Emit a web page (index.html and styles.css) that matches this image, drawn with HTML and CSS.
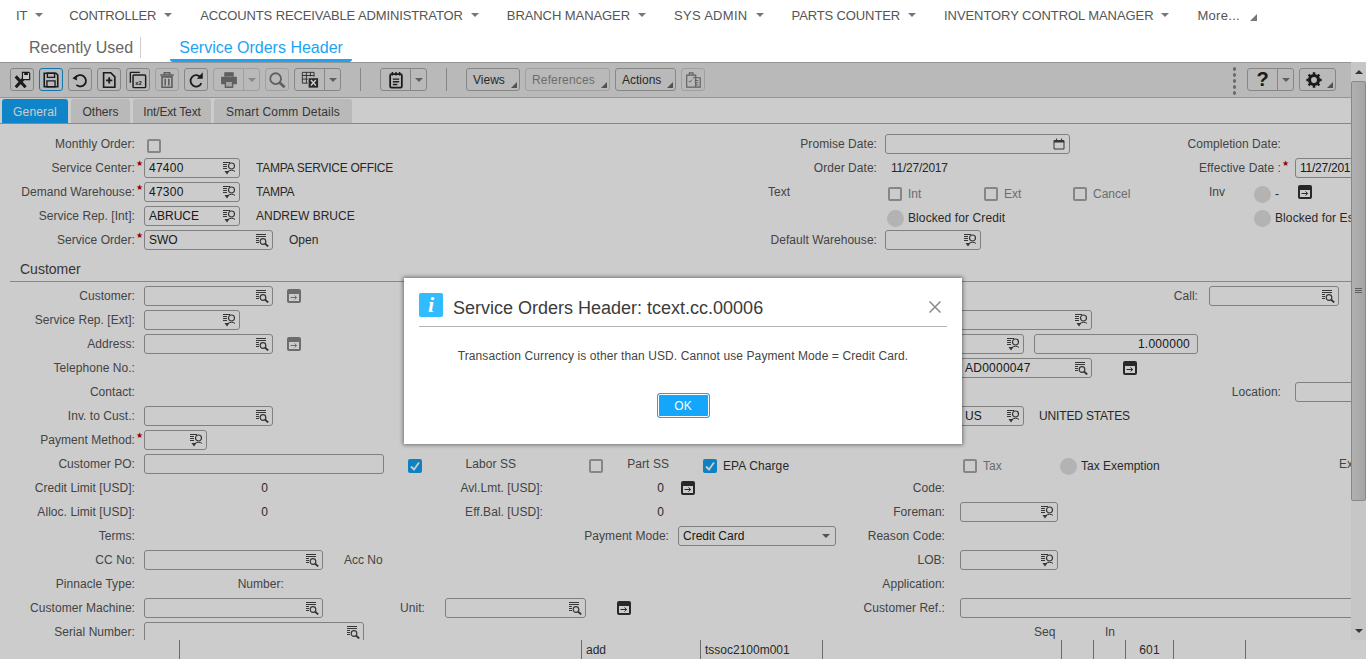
FILE: index.html
```html
<!DOCTYPE html>
<html lang="en">
<head>
<meta charset="utf-8">
<title>Service Orders Header</title>
<link rel="stylesheet" href="styles.css">
</head>
<body>
<svg class="defs" width="0" height="0" aria-hidden="true">
  <symbol id="lk" viewBox="0 0 13 13"><path d="M0 .5h10M0 2.5h10M0 4.5h3M0 6.5h3M0 8.5h3" stroke="currentColor" fill="none"/><circle cx="7" cy="7.5" r="2.8" stroke="currentColor" fill="none" stroke-width="1.2"/><path d="M9 9.5l3.2 3" stroke="currentColor" stroke-width="1.8" fill="none"/></symbol>
  <symbol id="lp" viewBox="0 0 13 13"><path d="M0 .5h7M0 2.5h4M0 4.5h4M0 6.5h4" stroke="currentColor" fill="none"/><circle cx="8.5" cy="4" r="3" stroke="currentColor" fill="none" stroke-width="1.2"/><path d="M5 9.5c.6-1.6 6.4-1.6 7 0" stroke="currentColor" fill="none"/><path d="M1.5 9h5l-2.5 3.5z" fill="currentColor"/></symbol>
  <symbol id="go" viewBox="0 0 14 14"><rect width="14" height="14" rx="2" fill="currentColor"/><rect x="2" y="5" width="10" height="7" fill="#fff"/><path d="M3.5 8.5h6M7.5 6.5l2.2 2-2.2 2" stroke="currentColor" fill="none"/></symbol>
  <symbol id="cal" viewBox="0 0 12 12"><path d="M1 2.5h10v8.5H1z" fill="none" stroke="currentColor"/><path d="M1 2h10v2.500H1z" fill="currentColor"/><path d="M3.500 .5v2M8.500 .5v2" stroke="currentColor"/></symbol>
</svg>

<nav class="topnav">
  <a class="nav-item first">IT<b class="caret"></b></a>
  <a class="nav-item n-ctrl">CONTROLLER<b class="caret"></b></a>
  <a class="nav-item">ACCOUNTS RECEIVABLE ADMINISTRATOR<b class="caret"></b></a>
  <a class="nav-item n-mid">BRANCH MANAGER<b class="caret"></b></a>
  <a class="nav-item n-open">SYS ADMIN<b class="caret"></b></a>
  <a class="nav-item">PARTS COUNTER<b class="caret"></b></a>
  <a class="nav-item n-mid">INVENTORY CONTROL MANAGER<b class="caret"></b></a>
  <a class="nav-item n-open">More...<b class="corner-nav"></b></a>
</nav>

<div class="pagetabs">
  <a class="pagetab recent">Recently Used</a>
  <a class="pagetab current">Service Orders Header</a>
</div>

<main class="app">
  <div class="work">
    <div class="pane">
      <div class="toolbar">
        <button class="tb"><svg viewBox="0 0 20 20"><path d="M3 6l11 12M14 6L3 18" stroke="#222" stroke-width="3.400" fill="none"/><path d="M10.500 1.500h7l1 1v7h-8z" fill="#fff" stroke="#222" stroke-width="1.300"/><path d="M12.500 1.500h4v3h-4z" fill="#222"/></svg></button>
        <button class="tb active"><svg viewBox="0 0 20 20"><path d="M2.500 2.500h13l2 2v13h-15z" fill="none" stroke="#222" stroke-width="1.800"/><path d="M6 2.500h8v4.500H6z" fill="none" stroke="#222" stroke-width="1.500"/><path d="M5.500 11h9v6.500h-9z" fill="none" stroke="#222" stroke-width="1.500"/></svg></button>
        <button class="tb"><svg viewBox="0 0 20 20"><path d="M5 7.500a6.300 6.300 0 1 1 1 8" fill="none" stroke="#222" stroke-width="2"/><path d="M1.500 8l5-3.500v6z" fill="#222"/></svg></button>
        <button class="tb"><svg viewBox="0 0 20 20"><path d="M4 2h8l4.500 4.500V18H4z" fill="none" stroke="#222" stroke-width="1.800"/><path d="M10.200 7v7M6.700 10.500h7" stroke="#222" stroke-width="2"/></svg></button>
        <button class="tb"><svg viewBox="0 0 20 20"><path d="M1.500 1.500H12M1.500 1.500V13" fill="none" stroke="#222" stroke-width="1.500"/><rect x="4.500" y="4.500" width="14" height="14" rx="1" fill="none" stroke="#222" stroke-width="1.600"/><text class="x2" x="7" y="15.500">x2</text></svg></button>
        <button class="tb off"><svg viewBox="0 0 20 20"><path d="M2.500 4.500h15M7 4V2h6v2M4.500 6.500h11V18h-11zM8 8.500V16M12 8.500V16" fill="none" stroke="#777" stroke-width="1.800"/></svg></button>
        <button class="tb"><svg viewBox="0 0 20 20"><path d="M15.500 7.500a6.300 6.300 0 1 0 .5 6" fill="none" stroke="#222" stroke-width="2"/><path d="M11 8.500h6.500V1.500z" fill="#222"/></svg></button>
        <div class="split off">
          <button class="tb main-part"><svg viewBox="0 0 20 20"><path d="M5.500 6V2h9v4M5.500 14H2V7h16v7h-3.500" fill="#777" stroke="#777" stroke-width="1.500"/><path d="M6 11.500h8V18H6z" fill="#ccc" stroke="#777" stroke-width="1.600"/></svg></button>
          <button class="tb drop"><b class="caret"></b></button>
        </div>
        <button class="tb off"><svg viewBox="0 0 20 20"><circle cx="8.500" cy="8.500" r="6" fill="none" stroke="#777" stroke-width="2"/><path d="M13 13l5.500 5" stroke="#777" stroke-width="3"/></svg></button>
        <div class="split">
          <button class="tb main-part"><svg viewBox="0 0 20 20"><path d="M1.500 1.500h13v5M1.500 1.500v12h6M1.500 5h13M1.500 9h6M6 1.500v12M10.500 1.500V6" fill="none" stroke="#333"/><path d="M8.500 8h10.500v10.500H8.500z" fill="#333"/><path d="M11 10l5.500 6M16.500 10L11 16" stroke="#fff" stroke-width="1.700"/></svg></button>
          <button class="tb drop"><b class="caret"></b></button>
        </div>
        <span class="sep"></span>
        <div class="split">
          <button class="tb main-part"><svg viewBox="0 0 20 20"><rect x="3.500" y="3.500" width="13" height="15" rx="1.500" fill="none" stroke="#222" stroke-width="2"/><path d="M6 1v4M10 1v4M14 1v4M6.500 9h7M6.500 12h7M6.500 15h5" stroke="#222" stroke-width="1.600"/></svg></button>
          <button class="tb drop"><b class="caret"></b></button>
        </div>
        <span class="sep"></span>
        <button class="tb text views">Views<b class="corner"></b></button>
        <button class="tb text refs off">References<b class="corner"></b></button>
        <button class="tb text actions">Actions<b class="corner"></b></button>
        <button class="tb off"><svg viewBox="0 0 20 20"><path d="M3 4.500h10V18H3zM6 4.500V2h4v2.500M10 7.500h8V18h-5" fill="none" stroke="#777" stroke-width="1.300"/><path d="M5 11l1.500 1.500L9 9.500M12 10.500h4M12 13h4M12 15.500h4" fill="none" stroke="#777"/></svg></button>
        <span class="dots"></span>
        <div class="split help">
          <button class="tb main-part qmark">?</button>
          <button class="tb drop"><b class="caret"></b></button>
        </div>
        <button class="tb gear"><svg viewBox="0 0 20 20"><circle cx="10" cy="10" r="5" fill="none" stroke="#222" stroke-width="3.600"/><path d="M10 1.500v4M10 14.500v4M1.500 10h4M14.500 10h4M4 4l2.800 2.800M13.200 13.200L16 16M16 4l-2.800 2.800M6.800 13.200L4 16" stroke="#222" stroke-width="2.800"/></svg><b class="corner"></b></button>
      </div>

      <div class="formtabs">
        <a class="ftab t-general on">General</a>
        <a class="ftab t-others">Others</a>
        <a class="ftab t-text">Int/Ext Text</a>
        <a class="ftab t-smart">Smart Comm Details</a>
      </div>

      <form class="form">
        <div class="row r1">
          <label class="lab">Monthly Order:</label><span class="chk"></span>
          <label class="lab p8">Promise Date:</label>
          <span class="field"><svg class="ic cal"><use href="#cal"/></svg></span>
          <label class="lab">Completion Date:</label>
        </div>
        <div class="row r2">
          <label class="lab req">Service Center:</label>
          <span class="field mr16"><em class="digits">47400</em><svg class="ic"><use href="#lp"/></svg></span>
          <span class="val tight">TAMPA SERVICE OFFICE</span>
          <label class="lab p14">Order Date:</label>
          <span class="val tight">11/27/2017</span>
          <label class="lab p14 req">Effective Date :</label>
          <span class="field"><em class="tight">11/27/2017</em></span>
        </div>
        <div class="row r3">
          <label class="lab req">Demand Warehouse:</label>
          <span class="field mr16"><em class="digits">47300</em><svg class="ic"><use href="#lp"/></svg></span>
          <span class="val tight">TAMPA</span>
          <span class="val soft-text">Text</span>
          <span class="chk"></span><span class="val dim low">Int</span>
          <span class="chk"></span><span class="val dim low">Ext</span>
          <span class="chk"></span><span class="val dim low">Cancel</span>
          <span class="val soft-text">Inv</span>
          <span class="dot low"></span><span class="val low">-</span>
          <svg class="go"><use href="#go"/></svg>
        </div>
        <div class="row r4">
          <label class="lab">Service Rep. [Int]:</label>
          <span class="field mr16"><em>ABRUCE</em><svg class="ic"><use href="#lp"/></svg></span>
          <span class="val">ANDREW BRUCE</span>
          <span class="dot low"></span><span class="val low wide">Blocked for Credit</span>
          <span class="dot low"></span><span class="val low wide">Blocked for Estimates</span>
        </div>
        <div class="row r5">
          <label class="lab req">Service Order:</label>
          <span class="field mr16"><em>SWO</em><svg class="ic"><use href="#lk"/></svg></span>
          <span class="val">Open</span>
          <label class="lab p8">Default Warehouse:</label>
          <span class="field"><svg class="ic"><use href="#lp"/></svg></span>
        </div>

        <h2 class="section">Customer</h2>

        <div class="row r6">
          <label class="lab">Customer:</label>
          <span class="field"><svg class="ic"><use href="#lk"/></svg></span>
          <svg class="go soft"><use href="#go"/></svg>
          <label class="lab p11">Call:</label>
          <span class="field"><svg class="ic"><use href="#lk"/></svg></span>
        </div>
        <div class="row r7">
          <label class="lab">Service Rep. [Ext]:</label>
          <span class="field"><svg class="ic"><use href="#lp"/></svg></span>
          <i></i>
          <span class="field"><svg class="ic"><use href="#lp"/></svg></span>
        </div>
        <div class="row r8">
          <label class="lab">Address:</label>
          <span class="field"><svg class="ic"><use href="#lk"/></svg></span>
          <svg class="go soft"><use href="#go"/></svg>
          <i></i>
          <span class="field"><svg class="ic"><use href="#lp"/></svg></span>
          <i></i>
          <span class="field num"><em class="digits">1.000000</em></span>
        </div>
        <div class="row r9">
          <label class="lab">Telephone No.:</label>
          <i></i>
          <span class="field"><em class="digits">AD0000047</em><svg class="ic"><use href="#lk"/></svg></span>
          <svg class="go"><use href="#go"/></svg>
        </div>
        <div class="row r10">
          <label class="lab">Contact:</label>
          <label class="lab p14">Location:</label>
          <span class="field"></span>
        </div>
        <div class="row r11">
          <label class="lab">Inv. to Cust.:</label>
          <span class="field"><svg class="ic"><use href="#lk"/></svg></span>
          <i></i>
          <span class="field mr15"><em>US</em><svg class="ic"><use href="#lp"/></svg></span>
          <span class="val tight2">UNITED STATES</span>
        </div>
        <div class="row r12">
          <label class="lab req">Payment Method:</label>
          <span class="field"><svg class="ic"><use href="#lp"/></svg></span>
        </div>
        <div class="row r13">
          <label class="lab">Customer PO:</label>
          <span class="field"></span>
          <span class="chk on"><svg viewBox="0 0 14 14"><path d="M3 7.500l3 3 5-7" fill="none" stroke="#fff" stroke-width="1.800"/></svg></span>
          <label class="lab p0">Labor SS</label>
          <span class="chk"></span>
          <label class="lab p0">Part SS</label>
          <span class="chk on"><svg viewBox="0 0 14 14"><path d="M3 7.500l3 3 5-7" fill="none" stroke="#fff" stroke-width="1.800"/></svg></span>
          <span class="val low wide">EPA Charge</span>
          <span class="chk"></span>
          <span class="val dim low">Tax</span>
          <span class="dot low"></span>
          <span class="val low">Tax Exemption</span>
          <span class="val soft-text">Exempt</span>
        </div>
        <div class="row r14">
          <label class="lab">Credit Limit [USD]:</label>
          <span class="lab p0 ink">0</span>
          <label class="lab p0">Avl.Lmt. [USD]:</label>
          <span class="lab p0 ink">0</span>
          <svg class="go"><use href="#go"/></svg>
          <label class="lab p0">Code:</label>
        </div>
        <div class="row r15">
          <label class="lab">Alloc. Limit [USD]:</label>
          <span class="lab p0 ink">0</span>
          <label class="lab p0">Eff.Bal. [USD]:</label>
          <span class="lab p0 ink">0</span>
          <label class="lab p15">Foreman:</label>
          <span class="field"><svg class="ic"><use href="#lp"/></svg></span>
        </div>
        <div class="row r16">
          <label class="lab">Terms:</label>
          <label class="lab">Payment Mode:</label>
          <span class="field select"><em>Credit Card</em><b class="caret"></b></span>
          <label class="lab p0">Reason Code:</label>
        </div>
        <div class="row r17">
          <label class="lab">CC No:</label>
          <span class="field mr21"><svg class="ic"><use href="#lk"/></svg></span>
          <span class="val soft-text">Acc No</span>
          <label class="lab p15">LOB:</label>
          <span class="field"><svg class="ic"><use href="#lp"/></svg></span>
        </div>
        <div class="row r18">
          <label class="lab">Pinnacle Type:</label>
          <label class="lab p0">Number:</label>
          <label class="lab p0">Application:</label>
        </div>
        <div class="row r19">
          <label class="lab">Customer Machine:</label>
          <span class="field"><svg class="ic"><use href="#lk"/></svg></span>
          <label class="lab p20">Unit:</label>
          <span class="field"><svg class="ic"><use href="#lk"/></svg></span>
          <svg class="go"><use href="#go"/></svg>
          <label class="lab p15">Customer Ref.:</label>
          <span class="field"></span>
        </div>
        <div class="row r20">
          <label class="lab">Serial Number:</label>
          <span class="field"><svg class="ic"><use href="#lk"/></svg></span>
          <i></i>
          <span class="val soft-text">Seq</span>
          <span class="val soft-text">In</span>
        </div>
      </form>
    </div>

    <div class="scrollbar">
      <span class="sb-btn"><b class="sb-up"></b></span>
      <span class="sb-track"><span class="sb-thumb"><span class="sb-grip"></span></span></span>
      <span class="sb-btn"><b class="sb-down"></b></span>
    </div>
  </div>

  <footer class="status">
    <span></span><span></span><span>add</span><span>tssoc2100m001</span><span></span><span></span><span></span><span class="center">601</span><span></span>
  </footer>

  <div class="overlay"></div>
</main>

<div class="modal" role="dialog">
  <header class="modal-head">
    <span class="info">i</span>
    <h1 class="modal-title">Service Orders Header: tcext.cc.00006</h1>
    <svg class="close" viewBox="0 0 12 12"><path d="M.5.5l11 11M11.500.5l-11 11" stroke="#8a8a8a" stroke-width="1.500" fill="none"/></svg>
  </header>
  <p class="modal-msg">Transaction Currency is other than USD. Cannot use Payment Mode = Credit Card.</p>
  <div class="modal-foot"><button class="ok">OK</button></div>
</div>
</body>
</html>
```

FILE: styles.css
```css
* { box-sizing: border-box; }
html, body { margin: 0; height: 659px; overflow: hidden; }
body {
  display: flex;
  flex-direction: column;
  background: #fff;
  font-family: "Liberation Sans", Arial, sans-serif;
  font-size: 12px;
  color: #333;
}
.defs { position: absolute; }

/* top navigation */
.topnav { display: flex; height: 30px; padding-left: 16px; align-items: center; flex: none; }
.nav-item { display: flex; align-items: center; margin-right: 28px; font-size: 13px; letter-spacing: -.12px; color: #555; white-space: nowrap; }
.nav-item.first { margin-right: 26px; }
.n-ctrl { letter-spacing: -.2px; }
.n-mid { letter-spacing: -.07px; }
.n-open { letter-spacing: .3px; }
.caret { display: block; width: 0; height: 0; border-left: 4px solid transparent; border-right: 4px solid transparent; border-top: 4px solid #777; }
.nav-item .caret { margin-left: 8px; }
.corner-nav { display: block; width: 0; height: 0; margin: 5px 0 0 10px; border-left: 7px solid transparent; border-bottom: 7px solid #777; }

/* page tabs */
.pagetabs { display: flex; height: 32px; flex: none; padding-left: 20px; }
.pagetab { font-size: 16px; line-height: 36px; height: 32px; white-space: nowrap; }
.recent { padding: 0 8px 0 9px; color: #666; position: relative; margin-right: 29px; }
.recent::after { content: ""; position: absolute; right: 0; top: 7px; height: 21px; border-right: 1px solid #ccc; }
.current { width: 182px; text-align: center; color: #1ba3f5; border-bottom: 3px solid #1ba3f5; border-radius: 0 0 3px 3px; }

/* application */
.app { position: relative; flex: 1; display: flex; flex-direction: column; min-height: 0; }
.overlay { position: absolute; inset: 0; background: rgba(0, 0, 0, .2); }
.work { display: flex; height: 578px; flex: none; }
.pane { width: 1351px; flex: none; display: flex; flex-direction: column; overflow: hidden; }

/* toolbar */
.toolbar { height: 36px; flex: none; display: flex; gap: 5px; align-items: flex-start; padding: 5px 15px 0 10px; background: #e8e8e8; border-top: 1px solid #bbb; border-bottom: 1px solid #bbb; }
.tb { width: 24px; height: 23px; padding: 0; display: flex; align-items: center; justify-content: center; background: transparent; border: 1px solid #a8a8a8; border-radius: 3px; font: inherit; color: #333; position: relative; }
.tb svg { width: 18px; height: 18px; display: block; }
.tb.active { border-color: #1a93e0; box-shadow: inset 0 0 0 1px #cfe9fb; }
.tb.off { border-color: #c8c8c8; color: #888; }
.split { display: flex; width: 47px; flex: none; border: 1px solid #a8a8a8; border-radius: 3px; height: 23px; }
.split.off { border-color: #c8c8c8; }
.split .tb { border: 0; height: 21px; border-radius: 0; }
.split .main-part { width: 30px; border-right: 1px solid #a8a8a8; }
.split.off .main-part { border-right-color: #c8c8c8; }
.split .drop { width: 15px; }
.split.off .caret { border-top-color: #aaa; }
.sep { width: 1px; height: 23px; margin: 0 14px; background: #a8a8a8; }
.tb.text { justify-content: flex-start; padding-left: 6px; }
.views { width: 54px; }
.refs { width: 85px; letter-spacing: .15px; }
.actions { width: 61px; }
.corner { position: absolute; right: 2px; bottom: 2px; width: 0; height: 0; border-left: 6px solid transparent; border-bottom: 6px solid #666; }
.dots { width: 3px; height: 28px; margin: -1px 6px 0 auto; background: radial-gradient(circle at 1.500px 2px, #888 1.500px, transparent 2px) 0 0 / 3px 6px repeat-y; }
.qmark { font-size: 20px; font-weight: bold; color: #222; }
.gear { width: 37px; justify-content: flex-start; padding-left: 5px; }
.x2 { font-size: 6.500px; font-weight: bold; fill: #222; }

/* form tabs */
.formtabs { height: 26px; flex: none; display: flex; gap: 3px; padding: 1px 0 0 2px; border-bottom: 1px solid #aaa; }
.ftab { height: 24px; line-height: 27px; text-align: center; letter-spacing: .18px; background: #e8e8e8; color: #444; border-radius: 3px 3px 0 0; }
.ftab.on { background: #13a6fa; color: #fff; }
.t-general { width: 66px; }
.t-others { width: 59px; letter-spacing: 0; }
.t-text { width: 78px; letter-spacing: -.15px; }
.t-smart { width: 138px; }

/* form */
.form { flex: 1; min-height: 0; overflow: hidden; padding-top: 8px; color: #555; }
.row { display: grid; height: 24px; align-items: center; white-space: nowrap; }
.lab { text-align: right; padding-right: 9px; position: relative; color: #555; letter-spacing: .05px; }
.p0 { padding-right: 0; }
.p8 { padding-right: 8px; }
.p11 { padding-right: 11px; }
.p14 { padding-right: 14px; }
.p15 { padding-right: 15px; }
.p20 { padding-right: 20px; }
.ink { color: #333; }
.req::after { content: "★"; position: absolute; margin-left: 1px; top: -2px; color: #c00000; font-family: "DejaVu Sans", sans-serif; font-size: 8px; line-height: 10px; }
.val { color: #333; overflow: hidden; }
.tight { letter-spacing: -.25px; }
.tight2 { letter-spacing: -.15px; }
.digits { letter-spacing: .25px; }
.wide { letter-spacing: .1px; }
.soft-text { color: #555; }
.dim { color: #888; }
.low { position: relative; top: 2px; }
.field { display: flex; align-items: center; height: 20px; padding: 0 3px 0 4px; border: 1px solid #a0a0a0; border-radius: 3px; color: #222; min-width: 0; overflow: hidden; }
.field em { font-style: normal; flex: 1; }
.field .ic { width: 13px; height: 13px; flex: none; margin-left: auto; color: #444; }
.field .cal { width: 12px; height: 12px; margin-right: 1px; }
.num em { text-align: right; padding-right: 4px; }
.select { justify-content: space-between; padding-right: 5px; }
.select .caret { border-top-color: #666; }
.mr15 { margin-right: 15px; }
.mr16 { margin-right: 16px; }
.mr21 { margin-right: 21px; }
.chk { justify-self: end; width: 14px; height: 14px; margin: 4px 6px 0 0; border: 2px solid #a8a8a8; border-radius: 2px; }
.chk.on { background: #13a0f0; border: 0; }
.chk svg { display: block; }
.dot { justify-self: end; width: 17px; height: 17px; margin-right: 4px; border-radius: 50%; background: #e0e0e0; }
.go { justify-self: end; width: 14px; height: 14px; color: #333; display: block; }
.go.soft { color: #888; }
.section { height: 30px; margin: 0 0 2px 10px; padding: 9px 0 0 10px; font-size: 14px; line-height: 17px; font-weight: normal; color: #444; border-bottom: 1px solid #aaa; }

.r1 { grid-template-columns: 144px 23px 718px 185px 220px; }
.r2 { grid-template-columns: 144px 112px 144px 491px 209px 195px 70px; }
.r3 { grid-template-columns: 144px 112px 512px 82px 58px 62px 34px 56px 33px 116px 31px 35px 10px 27px; }
.r4 { grid-template-columns: 144px 112px 544px 108px 292px 75px 76px; }
.r5 { grid-template-columns: 144px 145px 111px 485px 96px; }
.r6 { grid-template-columns: 144px 129px 28px 908px 130px; }
.r7 { grid-template-columns: 144px 96px 720px 132px; }
.r8 { grid-template-columns: 144px 129px 28px 659px 64px 10px 164px; }
.r9 { grid-template-columns: 144px 816px 132px 45px; }
.r10 { grid-template-columns: 144px 1151px 70px; }
.r11 { grid-template-columns: 144px 129px 687px 79px 200px; }
.r12 { grid-template-columns: 144px 63px; }
.r13 { grid-template-columns: 144px 240px 44px 88px 93px 60px 54px 177px 83px 57px 41px 258px 12px; }
.r14 { grid-template-columns: 144px 124px 275px 121px 31px 250px; }
.r15 { grid-template-columns: 144px 124px 275px 121px 296px 98px; }
.r16 { grid-template-columns: 144px 534px 158px 109px; }
.r17 { grid-template-columns: 144px 200px 156px 460px 98px; }
.r18 { grid-template-columns: 144px 140px 661px; }
.r19 { grid-template-columns: 144px 179px 122px 141px 45px 329px 400px; }
.r20 { grid-template-columns: 144px 220px 670px 71px 40px; }

/* scrollbar */
.scrollbar { width: 15px; flex: none; display: flex; flex-direction: column; background: #f8f8f8; }
.sb-btn { height: 19px; flex: none; display: flex; align-items: center; justify-content: center; }
.sb-up { width: 0; height: 0; border-left: 4px solid transparent; border-right: 4px solid transparent; border-bottom: 4px solid #444; }
.sb-down { width: 0; height: 0; border-left: 4px solid transparent; border-right: 4px solid transparent; border-top: 4px solid #444; }
.sb-track { flex: 1; min-height: 0; }
.sb-thumb { display: flex; align-items: center; justify-content: center; height: 420px; background: linear-gradient(90deg, #ddd, #cfcfcf); border: 1px solid #aaa; border-radius: 2px; }
.sb-grip { width: 7px; height: 6px; background: repeating-linear-gradient(#777 0 1px, transparent 1px 2px); }

/* status bar */
.status { height: 19px; flex: none; display: grid; grid-template-columns: 180px 402px 119px 122px 239px 32px 32px 48px 72px; line-height: 20px; color: #333; }
.status span { border-right: 1px solid #888; padding-left: 4px; }
.status .center { text-align: center; padding-left: 0; letter-spacing: .2px; }

/* dialog */
.modal { position: absolute; left: 404px; top: 278px; width: 558px; height: 166px; padding: 15px 15px 0; background: #fff; box-shadow: 0 0 4px 1px rgba(0, 0, 0, .45); }
.modal-head { display: flex; align-items: flex-start; height: 34px; border-bottom: 1px solid #b5b5b5; }
.info { width: 24px; height: 24px; flex: none; background: #31bcff; border-radius: 2px; color: #fff; text-align: center; font: italic bold 22px/24px "Liberation Serif", serif; }
.modal-title { margin: 5px 0 0 10px; flex: 1; font-size: 18px; line-height: 21px; font-weight: normal; color: #3b3b3b; }
.close { width: 12px; height: 12px; flex: none; margin: 8px 6px 0 0; }
.modal-msg { margin: 22px 0 0; text-align: center; line-height: 14px; letter-spacing: .1px; color: #444; }
.modal-foot { display: flex; justify-content: center; margin-top: 30px; }
.ok { width: 53px; height: 25px; padding: 0; background: #13a6fa; color: #fff; border: 1px solid #13a6fa; border-radius: 3px; box-shadow: inset 0 0 0 1px #fff; font: inherit; }
```
